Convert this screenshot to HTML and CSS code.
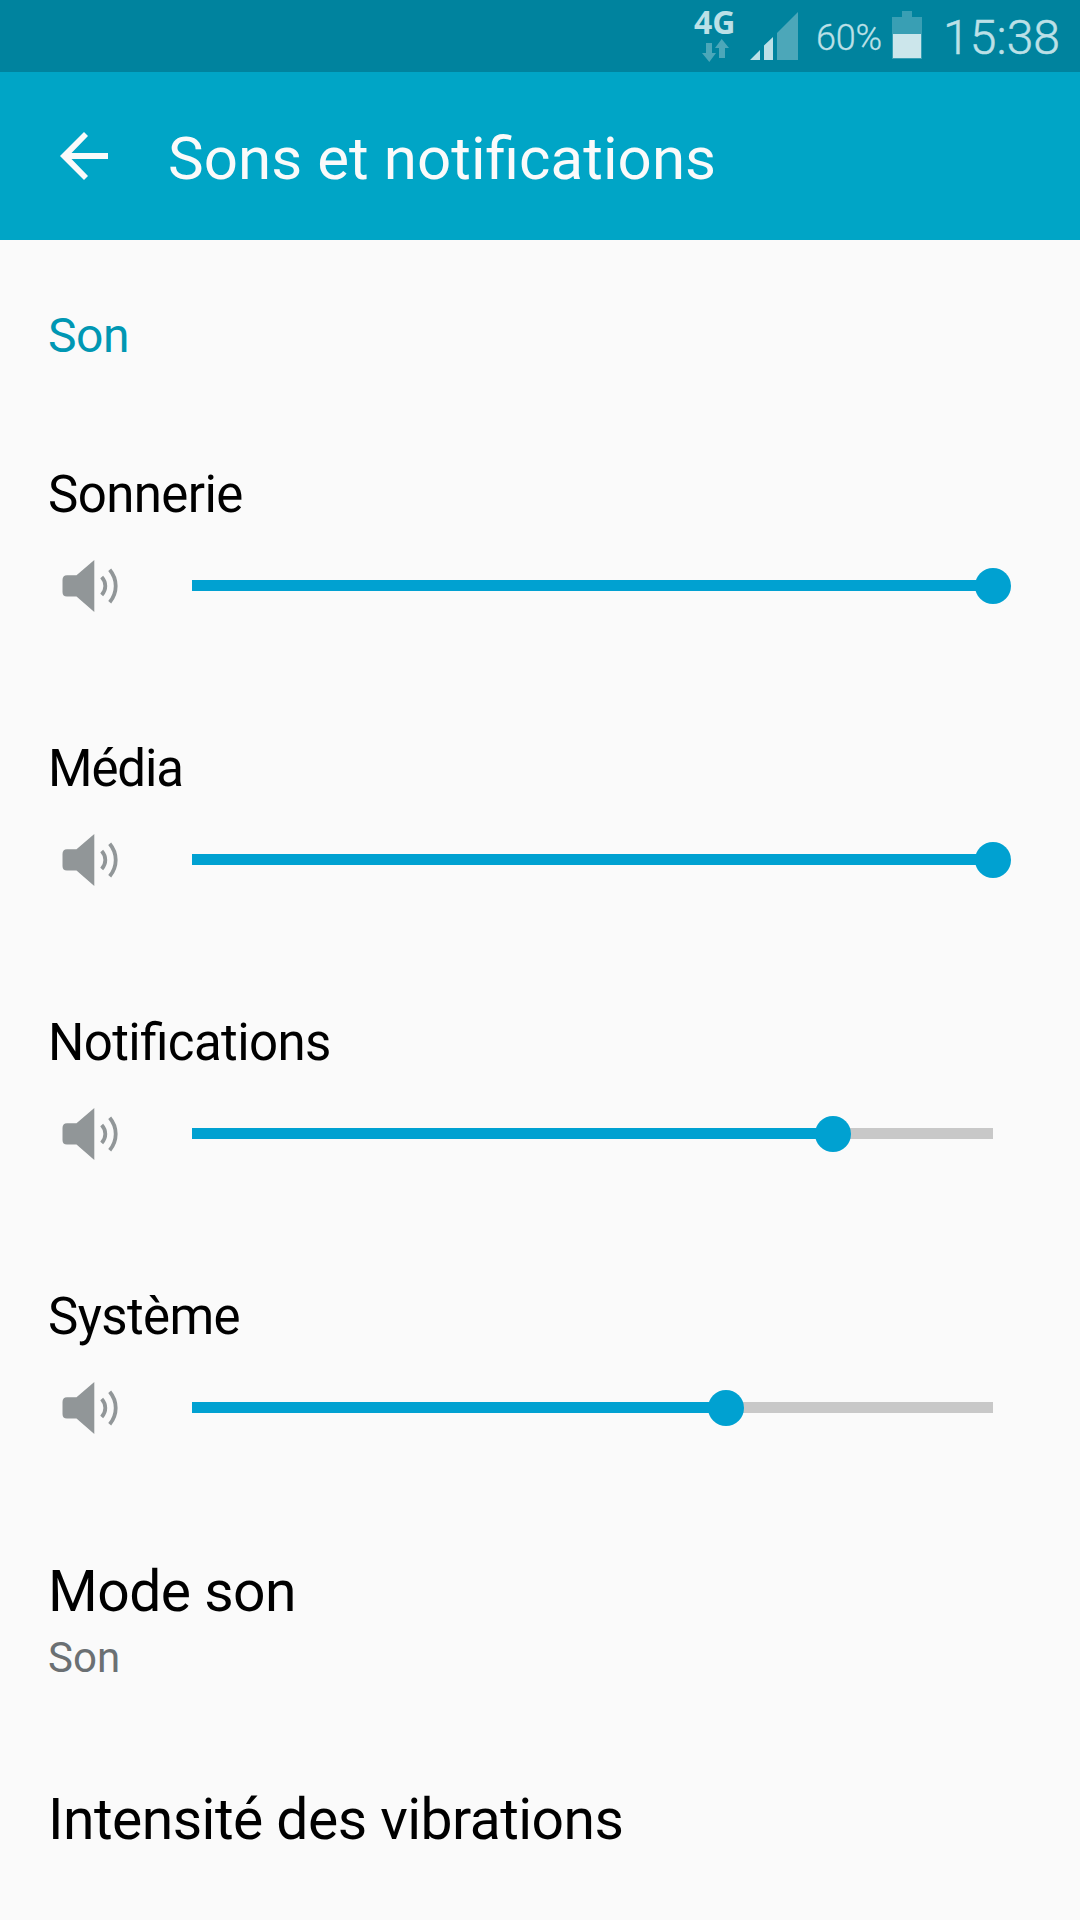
FILE: index.html
```html
<!DOCTYPE html>
<html lang="fr">
<head>
<meta charset="utf-8">
<title>Sons et notifications</title>
<link rel="stylesheet" href="styles.css">
</head>
<body>
<svg class="sprite" width="0" height="0">
  <symbol id="speaker" viewBox="0 0 58 52">
    <path fill="currentColor" d="M5 15.3H14.5L32.3 0V52L14.5 36.500H5Q.5 36.500 .5 32V20Q.5 15.300 5 15.300Z"/>
    <path fill="none" stroke="currentColor" stroke-width="3.800" d="M39.700 17Q43.300 21 43.300 26T39.700 35M47.700 9.800Q53.700 17 53.700 26T47.700 42.300"/>
  </symbol>
</svg>
<header class="status">
  <div class="network">
    <span class="network-type">4G</span>
    <svg class="traffic" width="28" height="24" viewBox="0 0 28 24"><path fill="#4ca7b9" d="M4 4H10V14H14L7.300 23 0 14H4ZM13 9L19.700 0 27 9H23V19H17V9Z"/></svg>
  </div>
  <svg class="signal" width="48" height="48" viewBox="0 0 48 48"><path fill="#bce0e7" d="M0 48L10 38V48ZM14 33.500L23 25V48H14Z"/><path fill="#4ca7b9" d="M27 21L48 0V48H27Z"/></svg>
  <span class="percent">60%</span>
  <svg class="battery" width="30" height="48" viewBox="0 0 30 48"><path fill="#399fb4" d="M10 0H20V6H30V48H0V6H10Z"/><path fill="#cce6eb" d="M1 23H29V47H1Z"/></svg>
  <span class="clock">15:38</span>
</header>
<nav class="appbar">
  <svg class="back" width="48" height="48" viewBox="0 0 48 48"><path fill="#fafafa" d="M48 21H11.500L28 4 24 0 0 24 24 48 28 44 11.500 27H48Z"/></svg>
  <h1 class="title">Sons et notifications</h1>
</nav>
<main class="content">
  <h2 class="section">Son</h2>
  <section class="volume">
    <span class="label">Sonnerie</span>
    <div class="control"><svg class="speaker"><use href="#speaker"/></svg><div class="track"><div class="fill" style="width:100%"><i class="thumb"></i></div></div></div>
  </section>
  <section class="volume">
    <span class="label label-tight">Média</span>
    <div class="control"><svg class="speaker"><use href="#speaker"/></svg><div class="track"><div class="fill" style="width:100%"><i class="thumb"></i></div></div></div>
  </section>
  <section class="volume">
    <span class="label">Notifications</span>
    <div class="control"><svg class="speaker"><use href="#speaker"/></svg><div class="track"><div class="fill" style="width:80%"><i class="thumb"></i></div></div></div>
  </section>
  <section class="volume">
    <span class="label">Système</span>
    <div class="control"><svg class="speaker"><use href="#speaker"/></svg><div class="track"><div class="fill" style="width:66.667%"><i class="thumb"></i></div></div></div>
  </section>
  <section class="item">
    <span class="item-title">Mode son</span>
    <span class="item-value">Son</span>
  </section>
  <section class="item">
    <span class="item-title">Intensité des vibrations</span>
  </section>
</main>
</body>
</html>
```
FILE: styles.css
```css
* { box-sizing: border-box; }
body {
  margin: 0;
  width: 1080px;
  height: 1920px;
  overflow: hidden;
  background: #fafafa;
  color: #000;
  font-family: Roboto, sans-serif;
  font-feature-settings: "liga" 1;
}
svg { display: block; flex: none; }
.sprite { display: none; }

.status {
  display: flex;
  justify-content: flex-end;
  height: 72px;
  padding-right: 20px;
  background: #00839e;
  color: #bce0e7;
  white-space: nowrap;
}
.network { width: 56px; padding-top: 4px; }
.network-type {
  display: block;
  height: 35px;
  font: bold 32px/36px "Open Sans", sans-serif;
}
.traffic { margin-left: 8px; }
.signal { margin-top: 12px; }
.percent {
  width: 66px;
  margin-left: 18px;
  font-size: 36px;
  font-weight: 300;
  line-height: 76px;
  letter-spacing: -0.2px;
  -webkit-text-stroke: 0.3px;
}
.battery { margin: 11px 0 0 10px; }
.clock {
  width: 117px;
  margin-left: 21px;
  font-size: 48px;
  font-weight: 300;
  line-height: 76px;
  letter-spacing: 0.1px;
  -webkit-text-stroke: 0.5px;
}

.appbar {
  display: flex;
  align-items: center;
  height: 168px;
  padding-left: 60px;
  background: #00a5c6;
  color: #fafafa;
}
.title {
  margin: 5px 0 0 60px;
  font-size: 60px;
  font-weight: 400;
  line-height: 70px;
  letter-spacing: 0.08px;
}

.content { padding: 66px 0 0 48px; }
.section {
  margin: 0;
  height: 158px;
  color: #0097b3;
  font-size: 48px;
  font-weight: 400;
  line-height: 60px;
  letter-spacing: -0.4px;
}
.volume { height: 274px; }
.label {
  display: block;
  font-size: 51px;
  line-height: 62px;
  letter-spacing: -0.6px;
}
.label-tight { letter-spacing: -1.1px; }
.control {
  display: flex;
  align-items: center;
  height: 52px;
  margin-top: 34px;
  padding-left: 14px;
}
.speaker { width: 58px; height: 52px; color: #919698; }
.track {
  width: 801px;
  height: 11px;
  margin: 0 0 1px 72px;
  background: #c8c8c8;
}
.fill {
  position: relative;
  height: 11px;
  background: #00a1d1;
}
.thumb {
  position: absolute;
  top: -12px;
  right: -18px;
  width: 36px;
  height: 36px;
  border-radius: 50%;
  background: #00a1d1;
}

.item { height: 228px; padding-top: 1px; }
.item-title {
  display: block;
  font-size: 57px;
  line-height: 61px;
  letter-spacing: -0.53px;
}
.item-value {
  display: block;
  margin-top: 11px;
  color: #6b7073;
  font-size: 42px;
  line-height: 50px;
}
```
